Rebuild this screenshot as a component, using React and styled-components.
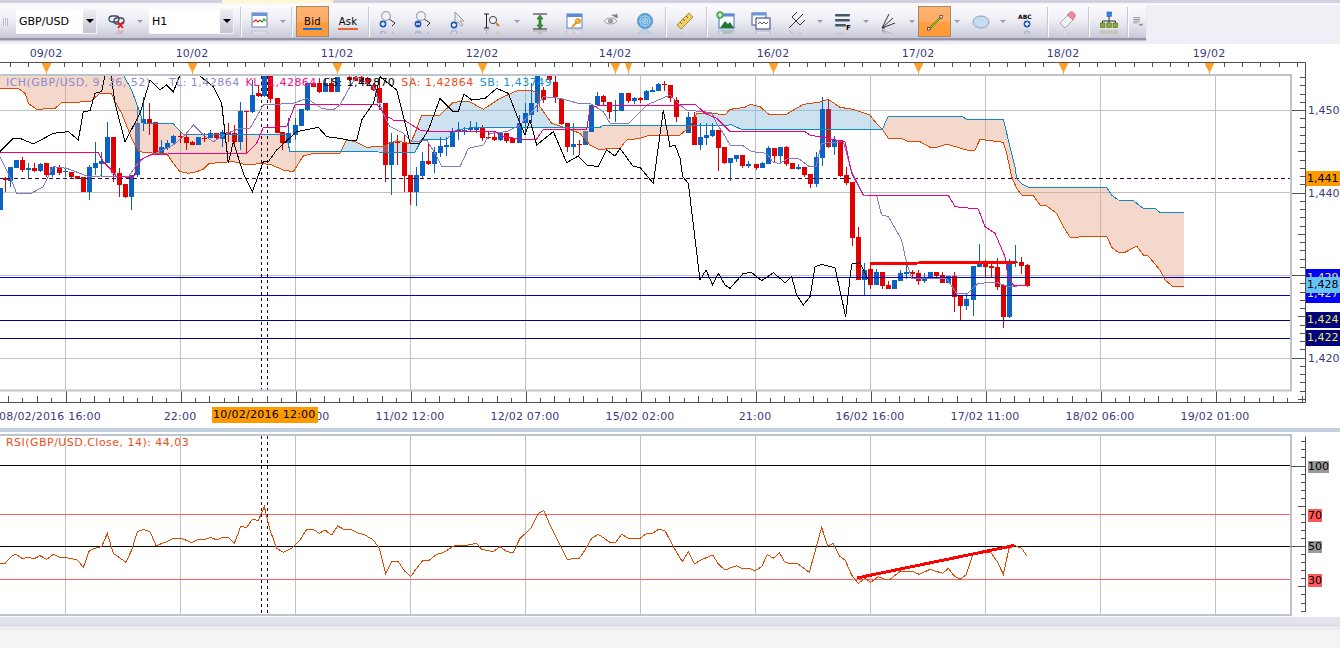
import styled, { createGlobalStyle } from "styled-components";

const GlobalStyle = createGlobalStyle`
  html, body { margin: 0; padding: 0; background: #f4f4f7; }
  body { font-family: "DejaVu Sans", Verdana, sans-serif; font-size: 11px; }
`;

const Page = styled.div`
  width: 1340px;
  height: 648px;
  display: flex;
  flex-direction: column;
  overflow: hidden;
  background: #fff;
`;

const TopStrip = styled.div`
  height: 3px;
  background: #d4d0e2;
  display: flex;
`;

const TabGlow = styled.div`
  width: 111px;
  margin-left: 222px;
  background: #fff6d2;
`;

const ToolbarRow = styled.div`
  height: 41px;
  background: #f0eff5;
  border-top: 2px solid #f8f8fb;
  box-sizing: border-box;
`;

const Toolbar = styled.div`
  width: 1146px;
  height: 35px;
  display: flex;
  align-items: center;
  background: linear-gradient(#fcfcfe 0%, #eeeef4 45%, #d8d8e4 80%, #c6c6d6 100%);
  border-bottom: 2px solid #9393aa;
  box-sizing: border-box;
  box-shadow: 0 1px 1px #c8c8d6;
`;

const Grip = styled.div`
  width: 5px;
  height: 8px;
  margin: 0 8px 0 3px;
  background: repeating-linear-gradient(90deg, #b8b8c6 0 1px, #f4f4f8 1px 2px);
`;

const Combo = styled.div`
  width: ${(p) => p.$w}px;
  margin-left: ${(p) => p.$ml || 0}px;
  height: 25px;
  display: flex;
  align-items: center;
  justify-content: space-between;
  background: #fff;
  box-sizing: border-box;
  padding-left: 3px;
  font-size: 11px;
  color: #000;
  border-right: 1px solid #f4f4f8;
  border-bottom: 1px solid #f4f4f8;
`;

const ComboArrow = styled.div`
  width: 13px;
  height: 100%;
  display: flex;
  align-items: center;
  justify-content: center;
  background: linear-gradient(#f0f0f5, #c4c4d2);
  &::after {
    content: "";
    border-left: 4px solid transparent;
    border-right: 4px solid transparent;
    border-top: 4px solid #000;
  }
`;

const Tool = styled.div`
  flex: 0 0 auto;
  width: ${(p) => p.$w}px;
  margin-left: ${(p) => p.$ml || 0}px;
  height: 100%;
  display: flex;
  align-items: center;
  justify-content: center;
`;

const Caret = styled.div`
  flex: 0 0 auto;
  width: ${(p) => p.$w}px;
  display: flex;
  justify-content: center;
  &::after {
    content: "";
    border-left: 3px solid transparent;
    border-right: 3px solid transparent;
    border-top: 3px solid #9a9ab0;
  }
`;

const Sep = styled.div`
  flex: 0 0 auto;
  width: 2px;
  margin-left: ${(p) => p.$ml || 0}px;
  height: 30px;
  background: linear-gradient(90deg, #c8c8d4 50%, #fcfcfe 50%);
`;

const ActiveButton = styled.div`
  flex: 0 0 auto;
  width: ${(p) => p.$w}px;
  margin-left: ${(p) => p.$ml || 0}px;
  height: 31px;
  box-sizing: border-box;
  border: 1px solid #a08a60;
  background: linear-gradient(#ffb272 0%, #ffab66 50%, #ff9e40 52%, #ff9a3a 100%);
  display: flex;
  flex-direction: column;
  align-items: center;
  justify-content: center;
`;

const QuoteLabel = styled.div`
  font-size: 10px;
  letter-spacing: 0.3px;
  line-height: 11px;
  color: #000;
  border-bottom: 2px solid ${(p) => p.$line};
  padding: 0 1px 1px;
  margin-top: 3px;
`;

const Glyph = styled.svg`
  display: block;
  width: 20px;
  height: 24px;
`;

// the toolbar icons all carry a faint mirror image below their baseline
const Icon = ({ base = 19, label, children }) => (
  <Glyph viewBox="0 0 20 24">
    {children}
    {label}
    <g opacity="0.22" transform={`matrix(1 0 0 -1 0 ${base * 2})`}>
      {children}
    </g>
  </Glyph>
);

const Lens = ({ sign }) => (
  <>
    <path d="M11 9l6 4-3 3" fill="none" stroke="#333" strokeWidth="1" />
    <circle cx="8" cy="6" r="4.4" fill="#f3f3f5" stroke="#a4a4ac" strokeWidth="1.2" />
    <circle cx="5" cy="14" r="3.4" fill="#1c5cb4" />
    <path d="M3 14h4" stroke="#fff" strokeWidth="1.3" />
    {sign === "+" && <path d="M5 12v4" stroke="#fff" strokeWidth="1.3" />}
  </>
);

const CursorPlus = () => (
  <>
    <path d="M7 2v12l3-2 3 4 2-1-3-4h4z" fill="#e8e8ec" stroke="#9a9aa4" />
    <circle cx="6" cy="15" r="3.4" fill="#1c5cb4" />
    <path d="M4 15h4M6 13v4" stroke="#fff" strokeWidth="1.3" />
  </>
);

const BoxZoom = () => (
  <>
    <path d="M1 4h5M3.5 4v14M1 18h5" stroke="#222" fill="none" />
    <circle cx="10" cy="10" r="3.6" fill="#eef4fa" stroke="#444" />
    <path d="M13 13l3 3" stroke="#d08020" strokeWidth="2" />
  </>
);

const FitHeight = () => (
  <>
    <path d="M3 4h14M3 19h14" stroke="#222" />
    <path d="M10 5l-3 4h2v6H7l3 4 3-4h-2V9h2z" fill="#2e9a2e" stroke="#1a5a1a" strokeWidth="0.6" />
  </>
);

const WindowKey = () => (
  <>
    <rect x="2" y="4" width="15" height="14" fill="#fff" stroke="#5a7fc0" />
    <rect x="2" y="4" width="15" height="3" fill="#5a8ad8" />
    <path d="M7 17l5-5" stroke="#e89a20" strokeWidth="2" />
    <circle cx="13" cy="11" r="2.6" fill="#f4b030" stroke="#c88010" strokeWidth="0.6" />
  </>
);

const Eye = () => (
  <>
    <path d="M2 11c3-4 10-4 13 0-3 4-10 4-13 0z" fill="#efefef" stroke="#a6a6a6" />
    <circle cx="8.5" cy="11" r="2.6" fill="#a0a0a0" />
    <path d="M9 6c2-2 4-2 5-1l1-2 1 5-5-1 2-1c-1-.5-2-.5-4 0z" fill="#7c7c7c" />
  </>
);

const Globe = () => (
  <>
    <circle cx="10" cy="11" r="7.5" fill="#5aa4dc" stroke="#4a8cc4" />
    <circle cx="10" cy="11" r="5" fill="none" stroke="#b4d8f0" />
    <circle cx="10" cy="11" r="2.5" fill="none" stroke="#b4d8f0" />
    <path d="M10 3.5v15M2.5 11h15M5 6l10 10M15 6L5 16" stroke="#b4d8f0" strokeWidth="0.6" />
  </>
);

const Ruler = () => (
  <>
    <path d="M2 15L14 3l4 4L6 19z" fill="#f2d060" stroke="#a88a30" />
    <path d="M5 12l2 2M8 9l2 2M11 6l2 2" stroke="#7a6420" />
  </>
);

const ImageWindow = () => (
  <>
    <rect x="3" y="4" width="15" height="14" fill="#fff" stroke="#3a6ab0" />
    <rect x="3" y="4" width="15" height="2.5" fill="#5a8ad8" />
    <path d="M4 18l5-7 3 3 2-2 4 6z" fill="#1e7a30" />
    <circle cx="4" cy="5" r="3.4" fill="#5cb85c" stroke="#2e8a2e" strokeWidth="0.6" />
    <path d="M2 5h4M4 3v4" stroke="#fff" strokeWidth="1.2" />
  </>
);

const TwoWindows = () => (
  <>
    <rect x="1" y="3" width="14" height="12" fill="#fff" stroke="#3a5a9a" />
    <rect x="1" y="3" width="14" height="2.5" fill="#6a96d8" />
    <rect x="5" y="8" width="14" height="11" fill="#fff" stroke="#2a3a7a" />
    <path d="M7 14l2-2 2 2 2-2 2 2 2-2" stroke="#555" fill="none" />
  </>
);

const Pitchfork = () => (
  <path d="M2 18l7-7M5 7l8 8M5 7l5-5M9 11l7-7M13 15l5-5" stroke="#333" fill="none" />
);

const FormulaBars = () => (
  <>
    <rect x="2" y="4" width="15" height="2.6" rx="1" fill="#44566a" />
    <rect x="2" y="9" width="15" height="2.6" rx="1" fill="#44566a" />
    <rect x="2" y="14" width="11" height="2.6" rx="1" fill="#44566a" />
  </>
);

const Fan = () => (
  <path d="M3 18L10 4M3 18L14 8M3 18l13-5M3 18h3" stroke="#333" fill="none" />
);

const PencilLine = () => (
  <>
    <path d="M4 19L16 7" stroke="#5a8a10" strokeWidth="2" />
    <path d="M4 19L16 7" stroke="#b0d030" strokeWidth="0.8" />
    <rect x="2.5" y="17.5" width="2.5" height="2.5" fill="#fff" stroke="#333" strokeWidth="0.7" />
    <rect x="15" y="5.5" width="2.5" height="2.5" fill="#fff" stroke="#333" strokeWidth="0.7" />
  </>
);

const EllipseShape = () => (
  <ellipse cx="10" cy="12" rx="8" ry="6" fill="#c6dcf0" stroke="#8aa4c0" />
);

const PlusBadge = () => (
  <>
    <circle cx="11" cy="14" r="3.4" fill="#1c5cb4" />
    <path d="M9 14h4M11 12v4" stroke="#fff" strokeWidth="1.3" />
  </>
);

const Eraser = () => (
  <>
    <path d="M2 13l8-8 5 5-8 8z" fill="#f2f2f4" stroke="#a8a8b0" />
    <path d="M9 5l3-3c1-.8 2-.8 3 0l2 2c.8 1 .8 2 0 3l-2 3z" fill="#e88aa0" stroke="#c87088" strokeWidth="0.6" />
  </>
);

const Hierarchy = () => (
  <>
    <rect x="8" y="2" width="4.5" height="4.5" fill="#2a8ae8" stroke="#1a5ab0" strokeWidth="0.6" />
    <path d="M10 6.5V11M3.5 13v-2h13v2M10 11v2" stroke="#333" fill="none" />
    <rect x="1.5" y="13" width="4.5" height="4.5" fill="#8aa838" stroke="#4a6810" strokeWidth="0.6" />
    <rect x="7.8" y="13" width="4.5" height="4.5" fill="#8aa838" stroke="#4a6810" strokeWidth="0.6" />
    <rect x="14" y="13" width="4.5" height="4.5" fill="#8aa838" stroke="#4a6810" strokeWidth="0.6" />
  </>
);

const ListMenu = () => (
  <>
    <path d="M5 7h8M5 9h8M5 11h8M5 13h5" stroke="#8a8a9a" />
    <path d="M11 14h6l-3 3z" fill="#8a8a9a" />
  </>
);

const LinkBroken = () => (
  <>
    <rect x="1" y="6" width="10" height="6" rx="3" fill="none" stroke="#3c4a62" strokeWidth="1.3" />
    <rect x="6" y="8" width="10" height="6" rx="3" fill="none" stroke="#3c4a62" strokeWidth="1.3" />
    <path d="M10 12l5 6M15 12l-5 6" stroke="#e81010" strokeWidth="1.8" />
  </>
);

const ChartWindow = () => (
  <>
    <rect x="2" y="3" width="15" height="14" fill="#fff" stroke="#6a7ea8" />
    <rect x="2" y="3" width="15" height="3" fill="#6a96d8" />
    <path d="M3 12l3-2 2 2 2-2" stroke="#e02020" fill="none" strokeWidth="1.2" />
    <path d="M10 10l2 2 2-3 2 2" stroke="#20a020" fill="none" strokeWidth="1.2" />
  </>
);

/* ---- chart data, traced in 3x crop coordinates ---- */
const r = "#e00000";
const b = "#0a62c2";
const dr = "#b02030";

const trace = (ox, oy, rows) =>
  rows.map(([x, t, bt, wt, wb, c, under]) => ({
    x: Math.round(ox + x / 3),
    t: oy + t / 3,
    b: oy + bt / 3,
    wt: oy + wt / 3,
    wb: oy + wb / 3,
    c,
    under,
  }));

const candles = [
  ...trace(0, 70, [
    [1, 355, 420, 355, 420, b],
    [14, 323, 330, 320, 365, r],
    [31, 292, 332, 290, 350, b],
    [48, 270, 295, 270, 295, b],
    [66, 270, 300, 262, 305, r],
    [84, 293, 299, 280, 325, b],
    [102, 293, 303, 280, 305, r],
    [120, 282, 303, 280, 305, b],
    [138, 280, 315, 280, 320, r],
    [156, 292, 315, 292, 322, b],
    [178, 292, 308, 285, 315, r],
    [195, 303, 307, 290, 320, b],
    [213, 305, 320, 305, 325, r],
    [231, 318, 326, 318, 328, r],
    [250, 322, 365, 322, 366, r],
    [267, 291, 365, 285, 390, b],
    [285, 280, 293, 215, 315, b],
    [303, 273, 282, 245, 320, b],
    [321, 200, 278, 155, 280, b],
    [339, 200, 310, 200, 335, r],
    [357, 310, 345, 295, 382, r],
    [375, 342, 382, 342, 385, r],
    [393, 315, 380, 315, 420, b],
    [411, 160, 315, 105, 320, b, true],
    [430, 147, 160, 80, 183, b],
    [448, 147, 160, 100, 195, r],
    [466, 155, 250, 155, 252, r],
    [484, 232, 252, 210, 255, b],
    [502, 220, 235, 210, 240, b],
    [520, 197, 220, 195, 222, b],
    [541, 198, 202, 183, 220, r],
    [558, 200, 218, 190, 240, r],
    [576, 215, 224, 212, 226, r],
    [594, 200, 224, 200, 226, b],
    [612, 203, 206, 190, 215, r],
    [630, 190, 203, 180, 205, b],
    [648, 190, 205, 188, 208, r],
    [666, 187, 207, 180, 230, b],
    [684, 186, 192, 160, 215, r],
    [702, 190, 215, 165, 225, r],
    [720, 123, 215, 95, 240, b],
    [738, 124, 127, 124, 250, r],
    [756, 75, 125, 30, 130, b],
    [774, 70, 78, 45, 80, r],
    [792, 18, 78, 18, 80, b],
    [810, 18, 88, 0, 100, r],
    [831, 85, 190, 85, 190, r],
    [846, 187, 220, 187, 240, r],
    [864, 190, 220, 145, 235, b],
    [885, 165, 195, 145, 210, b],
    [903, 118, 167, 118, 168, b],
    [921, 40, 120, 40, 122, b],
    [939, 40, 50, 35, 52, r],
    [957, 40, 65, 25, 68, r],
    [975, 40, 65, 25, 66, b],
    [993, 40, 65, 25, 66, r],
    [1010, 20, 65, 20, 66, b],
  ]),
  ...trace(340, 70, [
    [27, 20, 30, 18, 32, r],
    [45, 20, 32, 18, 34, r],
    [63, 20, 35, 18, 38, r],
    [81, 25, 42, 20, 45, r],
    [99, 45, 60, 40, 62, r],
    [118, 55, 100, 20, 120, r],
    [136, 98, 285, 98, 335, r, true],
    [154, 217, 285, 190, 375, b],
    [172, 217, 220, 195, 285, r],
    [193, 217, 318, 195, 365, r],
    [211, 315, 365, 315, 405, r],
    [229, 315, 365, 290, 408, b],
    [247, 273, 318, 245, 325, b],
    [265, 273, 283, 215, 285, r],
    [283, 245, 282, 230, 308, b],
    [301, 228, 248, 200, 262, b],
    [319, 225, 231, 200, 258, b],
    [337, 185, 230, 175, 232, b],
    [355, 180, 186, 155, 210, b],
    [373, 180, 186, 170, 195, b],
    [391, 175, 180, 153, 185, b],
    [409, 172, 180, 155, 190, b],
    [427, 172, 204, 165, 214, r],
    [445, 200, 204, 185, 208, r],
    [463, 200, 210, 185, 212, r],
    [481, 190, 210, 190, 212, b],
    [499, 190, 212, 190, 220, r],
    [517, 205, 218, 205, 220, r],
    [538, 160, 218, 135, 218, b],
    [556, 130, 160, 100, 195, b],
    [574, 98, 135, 40, 160, b],
    [592, 18, 100, 0, 125, b],
    [610, 60, 90, 50, 100, r],
    [628, 18, 30, 0, 32, r],
    [646, 35, 80, 18, 100, r],
    [664, 88, 163, 85, 165, r],
    [682, 160, 230, 160, 245, r],
    [700, 222, 230, 160, 255, b],
    [718, 222, 224, 210, 255, r],
    [736, 183, 225, 183, 225, b, true],
    [754, 105, 185, 105, 187, b],
    [772, 78, 105, 65, 108, b],
    [790, 78, 96, 75, 105, r],
    [808, 97, 125, 97, 148, r],
    [826, 120, 124, 90, 155, b],
    [844, 70, 122, 70, 123, b],
    [864, 70, 93, 70, 100, r],
    [882, 85, 93, 80, 103, b],
    [900, 85, 90, 80, 100, r],
    [918, 63, 90, 60, 90, b],
    [936, 60, 65, 50, 65, b],
    [954, 42, 62, 40, 62, b],
    [972, 42, 44, 33, 62, r],
    [990, 44, 85, 44, 95, r],
    [1008, 90, 140, 80, 155, r],
  ]),
  ...trace(680, 90, [
    [25, 80, 130, 65, 130, b],
    [43, 80, 165, 65, 165, r],
    [61, 140, 165, 98, 180, b],
    [79, 135, 145, 98, 165, b],
    [97, 120, 138, 100, 140, b],
    [115, 120, 173, 120, 243, r],
    [133, 172, 220, 172, 222, r],
    [151, 205, 218, 205, 272, b],
    [169, 195, 207, 195, 217, b],
    [187, 195, 228, 195, 235, r],
    [205, 222, 228, 213, 233, b],
    [227, 222, 234, 222, 240, r],
    [245, 220, 234, 215, 235, b],
    [263, 175, 222, 168, 222, b],
    [281, 175, 198, 175, 220, r],
    [299, 172, 198, 172, 217, b],
    [317, 172, 222, 168, 228, r],
    [335, 220, 236, 220, 238, r],
    [353, 232, 236, 222, 240, b],
    [371, 232, 255, 232, 262, r],
    [389, 253, 282, 253, 295, r],
    [407, 202, 282, 185, 290, b],
    [425, 58, 204, 22, 228, b],
    [443, 58, 172, 30, 175, dr],
    [461, 150, 170, 138, 195, b],
    [479, 150, 258, 150, 260, r],
    [497, 256, 278, 232, 285, r],
    [515, 275, 443, 275, 467, r],
    [533, 441, 570, 410, 570, r],
    [553, 540, 570, 520, 615, b],
    [571, 538, 584, 520, 597, r],
    [589, 546, 585, 536, 585, b],
    [607, 546, 588, 546, 597, r],
    [625, 585, 597, 572, 597, r],
    [643, 570, 597, 570, 597, b],
    [661, 549, 573, 540, 573, b],
    [679, 547, 553, 525, 567, b],
    [697, 547, 552, 540, 568, r],
    [715, 549, 573, 541, 585, r],
    [733, 566, 572, 548, 578, b],
    [751, 547, 563, 547, 563, b],
    [769, 547, 558, 547, 560, r],
    [787, 555, 578, 547, 580, r],
    [805, 558, 580, 558, 580, b],
    [823, 558, 620, 545, 665, r],
    [841, 617, 648, 617, 690, r],
    [859, 628, 647, 610, 660, b],
    [879, 528, 630, 528, 678, b],
    [898, 522, 530, 462, 530, b],
    [916, 522, 530, 510, 565, r],
    [934, 527, 533, 520, 565, r],
    [952, 531, 590, 503, 600, r],
    [970, 586, 681, 586, 713, r],
    [988, 517, 682, 507, 684, b],
  ]),
  ...trace(1000, 170, [
    [46, 276, 280, 225, 290, b],
    [64, 276, 287, 262, 312, r],
    [82, 286, 348, 283, 350, r],
  ]),
];

const pts = (ox, oy, list) => list.map(([x, y]) => [ox + x / 3, oy + y / 3]);
const toPoints = (list) => list.map((p) => p.join(",")).join(" ");

const senkouA = [
  ...pts(0, 70, [[0,55],[55,55],[75,70],[85,100],[110,118],[165,115],[185,98],[270,95],[300,70],[335,72],[345,95],[365,130],[395,205],[415,245],[466,250],[500,250],[520,280],[540,305],[565,310],[590,305],[610,298],[625,282],[660,277],[700,275],[740,285],[785,280],[815,285],[850,300],[880,305],[910,258],[940,250],[1020,250]]),
  ...pts(340, 70, [[20,210],[45,215],[80,232],[130,228],[170,212],[210,222],[225,190],[245,135],[300,135],[340,97],[385,93],[430,118],[480,85],[530,63],[575,60],[595,72],[600,110],[635,160],[680,175],[720,190],[750,225],[775,238],[840,235],[860,210],[900,205],[930,195],[1020,195]]),
  ...pts(680, 90, [[30,110],[50,70],[100,70],[135,75],[150,58],[195,52],[210,43],[240,50],[265,72],[320,72],[370,43],[420,36],[445,28],[480,52],[520,58],[570,75],[585,95],[607,118],[625,145],[665,145],[680,153],[720,155],[750,172],[770,172],[800,162],[860,180],[885,180],[900,148],[970,157],[980,190],[995,260],[1010,295]]),
  ...pts(1000, 170, [[65,75],[100,77],[120,105],[140,108],[170,130],[190,170],[210,202],[320,198],[335,232],[355,247],[375,247],[410,228],[430,255],[445,258],[480,300],[495,330],[518,349],[552,349]]),
];

const senkouB = [
  ...pts(0, 70, [[0,-60],[340,-60],[370,15],[395,60],[415,115],[430,160],[520,162],[550,193],[860,195],[870,245],[1020,245]]),
  ...pts(340, 70, [[225,247],[245,208],[320,208],[350,180],[400,172],[780,172],[790,166],[1020,166]]),
  ...pts(680, 90, [[155,105],[185,118],[607,118],[625,78],[845,78],[860,88],[970,88],[985,150],[1005,230]]),
  ...pts(1000, 170, [[50,25],[65,42],[85,52],[320,52],[335,75],[355,90],[400,92],[430,115],[465,115],[480,127],[552,127]]),
];

const chikou = [
  ...pts(0, 70, [[0,245],[40,205],[60,205],[100,222],[160,190],[205,185],[235,210],[250,125],[270,122],[285,70],[305,65],[315,15],[330,-10],[345,100],[375,215],[420,130],[450,30],[480,60],[500,45],[520,65],[540,15],[560,-10],[577,0],[640,50],[665,100],[685,280],[700,215],[730,310],[757,365],[790,275],[805,275],[830,240],[890,185],[955,172],[980,200],[1020,205]]),
  ...pts(340, 70, [[25,210],[50,212],[65,150],[100,100],[120,20],[170,60],[210,220],[240,220],[265,180],[300,85],[340,125],[355,125],[372,72],[395,90],[435,85],[470,55],[505,70],[530,135],[555,195],[570,150],[590,225],[640,185],[680,278],[715,258],[740,285],[775,290],[800,240],[825,258],[840,235],[880,290],[900,292],[940,340],[970,120],[990,230],[1005,225],[1020,265]]),
  ...pts(680, 90, [[8,260],[25,280],[60,570],[78,540],[98,585],[115,550],[135,585],[150,595],[190,550],[215,548],[245,572],[280,548],[315,578],[335,560],[350,615],[370,645],[390,620],[405,530],[425,523],[465,533],[497,680],[515,522],[540,518],[565,570],[572,583]]),
];

const tenkan = [
  ...pts(0, 70, [[0,260],[30,320],[50,370],[90,372],[130,350],[160,290],[200,295],[240,310],[265,320],[300,318],[385,320],[410,285],[430,265],[465,250],[520,225],[555,195],[580,165],[610,195],[640,215],[680,190],[720,175],[750,175],[790,105],[880,100],[920,85],[965,115],[1000,120],[1020,105]]),
  ...pts(340, 70, [[30,50],[50,20],[100,50],[130,130],[150,170],[190,190],[215,215],[235,215],[260,210],[285,250],[305,290],[360,290],[385,235],[430,225],[450,190],[500,185],[540,165],[580,120],[610,80],[660,85],[715,100],[750,100],[790,125],[810,160],[865,162],[920,105],[990,75],[1020,105]]),
  ...pts(680, 90, [[20,60],[95,68],[110,100],[130,130],[150,165],[190,168],[215,185],[260,190],[280,218],[300,220],[325,205],[355,205],[385,228],[408,230],[425,160],[490,155],[515,245],[550,315],[590,318],[605,375],[625,380],[665,450],[680,520],[695,565],[800,565],[830,610],[860,612],[895,580],[950,577],[985,590],[1010,590]]),
];

const kijun = [
  ...pts(0, 70, [[0,248],[295,248],[310,275],[335,300],[350,320],[400,322],[420,270],[450,255],[540,250],[740,250],[770,220],[790,172],[860,170],[885,105],[1020,102]]),
  ...pts(340, 70, [[110,102],[135,135],[160,150],[195,152],[240,180],[265,184],[465,184],[490,200],[540,207],[590,207],[610,178],[740,178],[750,115],[780,105],[1020,105]]),
  ...pts(680, 90, [[45,42],[75,70],[110,85],[150,125],[375,125],[390,135],[495,155],[515,250],[550,315],[805,316],[825,350],[895,357],[915,410],[945,430],[975,500],[985,565],[1005,590]]),
  ...pts(1000, 170, [[40,345],[85,348]]),
];

const rsi = [
  ...pts(0, 380, [[0,550],[15,550],[35,528],[48,523],[68,536],[80,533],[105,535],[120,527],[140,538],[160,523],[180,532],[200,533],[232,540],[250,562],[268,512],[285,505],[305,500],[322,460],[340,520],[378,547],[395,510],[412,455],[430,448],[450,455],[468,497],[500,485],[520,475],[545,475],[575,488],[595,478],[615,478],[632,472],[650,480],[668,472],[685,472],[703,490],[722,440],[740,442],[757,418],[775,421],[793,380],[810,450],[830,505],[850,517],[875,505],[900,480],[920,448],[940,448],[958,460],[975,450],[995,465],[1013,438],[1030,447],[1050,447],[1072,458],[1095,465],[1120,480],[1138,505],[1157,580],[1175,545],[1195,545],[1213,572],[1232,590],[1250,565],[1268,542],[1285,543],[1310,523],[1330,518]]),
  ...pts(450, 400, [[0,445],[15,436],[50,436],[80,430],[95,448],[130,455],[150,440],[170,455],[190,458],[210,415],[243,385],[265,340],[282,332],[300,375],[352,478],[388,475],[405,450],[425,415],[445,403],[480,427],[497,427],[515,403],[535,415],[570,415],[590,400],[608,400],[625,388],[645,392],[670,440],[697,485],[715,455],[733,492],[752,480],[788,465],[805,492],[825,510],[860,497],[880,507],[897,505],[915,512],[935,500],[952,463],[970,475],[988,458],[1005,487],[1025,492],[1042,490],[1078,517],[1115,382],[1133,438],[1150,430],[1168,468],[1185,480],[1205,525],[1225,550],[1245,535],[1262,547],[1285,530],[1310,540]]),
  ...pts(890, 400, [[0,538],[30,515],[70,515],[88,523],[120,508],[158,520],[175,505],[192,527],[210,538],[228,525],[248,465],[270,458],[303,458],[322,485],[340,523],[357,445],[372,436],[395,445],[410,467]]),
];

const yAt = (line, x) => {
  for (let i = 1; i < line.length; i++) {
    const [x0, y0] = line[i - 1];
    const [x1, y1] = line[i];
    if (x >= x0 && x <= x1) return x1 === x0 ? y1 : y0 + ((y1 - y0) * (x - x0)) / (x1 - x0);
  }
  return line[line.length - 1][1];
};

// splits the space between the two senkou lines in runs of one sign
const cloudAreas = () => {
  const areas = [];
  let run = null;
  for (let x = 0; x <= 1184; x++) {
    const a = yAt(senkouA, x);
    const s = yAt(senkouB, x);
    const bull = a < s;
    if (!run || run.bull !== bull) {
      if (run) areas.push(run);
      run = { bull, top: [], bot: [] };
    }
    run.top.push([x, a]);
    run.bot.push([x, s]);
  }
  areas.push(run);
  return areas;
};

const gridX = Array.from({ length: 11 }, (_, i) => 65.5 + i * 115);
const axisPaths = {
  top: "",
  bottom: "",
  right: "",
  rsi: "",
};
for (let n = -2; n * 18.125 + 46 < 1305; n++) {
  const x = Math.round(46 + n * 18.125) + 0.5;
  axisPaths.top += `M${x} 62v5`;
}
for (let n = -4; n * 14.375 + 65.5 < 1305; n++) {
  const x = Math.round(65.5 + n * 14.375) + 0.5;
  const len = n % 8 === 0 ? 12 : (n + 800) % 2 === 0 ? 6 : 4;
  axisPaths.bottom += `M${x} 402v-${len}`;
}
for (let n = -4; 110 + n * 8.25 < 402; n++) {
  const y = Math.round(110 + n * 8.25) + 0.5;
  const len = (n + 100) % 10 === 0 ? 13 : (n + 100) % 5 === 0 ? 7 : 5;
  axisPaths.right += `M1305 ${y}h-${len}`;
}
for (let n = -3; n <= 18; n++) {
  const y = Math.round(465.5 + n * 8.06) + 0.5;
  const len = (n + 100) % 10 === 0 ? 14 : (n + 100) % 5 === 0 ? 7 : 4;
  axisPaths.rsi += `M1305 ${y}h-${len}`;
}

const dayMarks = [
  { x: 46, label: "09/02" },
  { x: 192, label: "10/02" },
  { x: 337, label: "11/02" },
  { x: 482, label: "12/02" },
  { x: 615, label: "14/02" },
  { x: 628, small: true },
  { x: 773, label: "16/02" },
  { x: 918, label: "17/02" },
  { x: 1063, label: "18/02" },
  { x: 1209, label: "19/02" },
];

const timeLabels = [
  { x: 50, label: "08/02/2016 16:00" },
  { x: 180, label: "22:00" },
  { x: 295, label: "10/02 17:00" },
  { x: 410, label: "11/02 12:00" },
  { x: 525, label: "12/02 07:00" },
  { x: 640, label: "15/02 02:00" },
  { x: 755, label: "21:00" },
  { x: 870, label: "16/02 16:00" },
  { x: 985, label: "17/02 11:00" },
  { x: 1100, label: "18/02 06:00" },
  { x: 1215, label: "19/02 01:00" },
];

const levelLines = [
  { y: 277.5, c: "#0000c4" },
  { y: 295.5, c: "#0000c4" },
  { y: 320.5, c: "#000080" },
  { y: 338.5, c: "#000080" },
];

const Pane = styled.div`
  position: relative;
  height: ${(p) => p.$h}px;
  flex: 0 0 auto;
  background: #fff;
`;

const PaneSvg = styled.svg`
  display: block;
  position: absolute;
  left: 0;
  top: 0;
`;

const Divider = styled.div`
  height: 4px;
  flex: 0 0 auto;
  background: #c2cfde;
`;

const Footer = styled.div`
  flex: 1;
  background: linear-gradient(#e3e3ed 0 8px, #d4d4de 8px 9px, #edecf2 9px 13px, #f4f4f7 13px);
`;

const Legend = styled.div`
  position: absolute;
  left: 6px;
  top: ${(p) => p.$top}px;
  display: flex;
  gap: 6px;
  font-size: 11px;
  line-height: 14px;
  letter-spacing: 0.47px;
  white-space: nowrap;
`;

const LegendItem = styled.span`
  color: ${(p) => p.$c};
  margin-right: ${(p) => p.$mr || 0}px;
`;

const PriceTag = styled.div`
  position: absolute;
  left: ${(p) => p.$left || 1306}px;
  top: ${(p) => p.$top}px;
  height: ${(p) => p.$h || 16}px;
  line-height: ${(p) => p.$lh || p.$h || 16}px;
  padding: 0 ${(p) => p.$pad ?? 1}px;
  background: ${(p) => p.$bg};
  color: ${(p) => p.$fg};
  font-size: 11px;
  overflow: hidden;
  width: ${(p) => (p.$w ? `${p.$w}px` : "auto")};
  box-sizing: border-box;
`;

const CrossTime = styled.div`
  position: absolute;
  left: 212px;
  top: 363px;
  width: 106px;
  height: 16px;
  line-height: 16px;
  padding-left: 1px;
  box-sizing: border-box;
  background: #ff9900;
  color: #000;
  font-size: 11px;
  letter-spacing: 0.25px;
  white-space: nowrap;
`;

const axisText = {
  fontFamily: "DejaVu Sans",
  fontSize: 11,
  fill: "#3b3b7d",
  textAnchor: "middle",
  letterSpacing: 0.2,
};

const Line = ({ points, color, width = 1 }) => (
  <polyline
    points={toPoints(points)}
    fill="none"
    stroke={color}
    strokeWidth={width}
    shapeRendering="crispEdges"
  />
);

const CandleBars = ({ items }) =>
  items.map((k) => (
    <g key={k.x} shapeRendering="crispEdges">
      <rect x={k.x} y={k.wt} width="1" height={Math.max(k.wb - k.wt, 1)} fill={k.c} />
      <rect x={k.x - 2} y={k.t} width="5" height={Math.max(k.b - k.t, 1)} fill={k.c} />
    </g>
  ));

const CloudBand = () =>
  cloudAreas().map((area, i) => (
    <polygon
      key={i}
      points={toPoints([...area.top, ...[...area.bot].reverse()])}
      fill={area.bull ? "rgba(127,182,217,0.4)" : "rgba(230,157,127,0.4)"}
      stroke="none"
    />
  ));

const MainChart = () => (
  <PaneSvg width="1340" height="384" viewBox="0 44 1340 384">
    <defs>
      <clipPath id="plot">
        <rect x="0" y="76" width="1290" height="314" />
      </clipPath>
    </defs>

    {dayMarks
      .filter((d) => d.label)
      .map((d) => (
        <text key={d.label} x={d.x} y="57" {...axisText}>
          {d.label}
        </text>
      ))}
    <path d={`M0 62.5H1305.5V402.5H0`} fill="none" stroke="#505050" />
    <path d={axisPaths.top + axisPaths.bottom + axisPaths.right} stroke="#505050" shapeRendering="crispEdges" />

    <g clipPath="url(#plot)" shapeRendering="crispEdges">
      {gridX.map((x) => (
        <path key={x} d={`M${x} 76V390`} stroke="#c0c0c0" />
      ))}
      {[110.5, 192.5, 275.5, 358.5].map((y) => (
        <path key={y} d={`M0 ${y}H1290`} stroke="#c0c0c0" />
      ))}
      <CandleBars items={candles.filter((k) => k.under)} />
      <CloudBand />
      <CandleBars items={candles.filter((k) => !k.under)} />
      <path d="M0 178.5H1290" stroke="#400040" strokeDasharray="4 3" />
      {levelLines.map((l) => (
        <path key={l.y} d={`M0 ${l.y}H1290`} stroke={l.c} />
      ))}
      <path d="M261.5 76V390M267.5 76V390" stroke="#300030" strokeDasharray="3 3" />
      <Line points={senkouA} color="#e04800" />
      <Line points={senkouB} color="#1088c0" />
      <Line points={tenkan} color="#8878c4" />
      <Line points={kijun} color="#f00080" />
      <Line points={chikou} color="#000" />
      <path d="M870 263.5L1017 262" stroke="#ff0000" strokeWidth="3" shapeRendering="crispEdges" />
    </g>

    <path d="M0 75H1291V390.5H0" fill="none" stroke="#bcc4cc" strokeWidth="2" />

    {dayMarks.map((d) => (
      <g key={d.x}>
        <path d={`M${d.x + 0.5} 72V76`} stroke="#f0b070" />
        <polygon
          points={
            d.small
              ? `${d.x - 3},63 ${d.x + 4},63 ${d.x + 0.5},73`
              : `${d.x - 4.5},63 ${d.x + 5.5},63 ${d.x + 0.5},73`
          }
          fill="#ffa028"
        />
      </g>
    ))}

    {timeLabels.map((t) => (
      <text key={t.x} x={t.x} y="420" {...axisText}>
        {t.label}
      </text>
    ))}
  </PaneSvg>
);

const RsiChart = () => (
  <PaneSvg width="1340" height="185" viewBox="0 432 1340 185">
    <defs>
      <clipPath id="rsiplot">
        <rect x="0" y="436" width="1290" height="178" />
      </clipPath>
    </defs>
    <g clipPath="url(#rsiplot)" shapeRendering="crispEdges">
      {gridX.map((x) => (
        <path key={x} d={`M${x} 436V614`} stroke="#c0c0c0" />
      ))}
      <path d="M0 465.5H1290M0 546.5H1290" stroke="#000" />
      <path d="M0 514.5H1290M0 579.5H1290" stroke="#ff6060" />
      <path d="M261.5 436V614M267.5 436V614" stroke="#300030" strokeDasharray="3 3" />
      <Line points={rsi} color="#e04800" />
      <path d="M857 578L1014 545.5" stroke="#ff0000" strokeWidth="3" shapeRendering="crispEdges" />
    </g>
    <path d="M0 435H1291V615H0" fill="none" stroke="#bcc4cc" strokeWidth="2" />
    <path d="M1305.5 436.5V612" stroke="#505050" fill="none" />
    <path d={axisPaths.rsi} stroke="#505050" shapeRendering="crispEdges" />
  </PaneSvg>
);

const IconLabel = styled.text`
  font-family: "DejaVu Sans", sans-serif;
  font-weight: 700;
  fill: #000;
`;

export default function App() {
  return (
    <>
      <GlobalStyle />
      <Page>
        <TopStrip>
          <TabGlow />
        </TopStrip>
        <ToolbarRow>
          <Toolbar>
            <Grip />
            <Combo $w={81}>
              GBP/USD
              <ComboArrow />
            </Combo>
            <Tool $w={28} $ml={7}><Icon><LinkBroken /></Icon></Tool>
            <Caret $w={16} />
            <Combo $w={85} $ml={1}>
              H1
              <ComboArrow />
            </Combo>
            <Sep $ml={6} />
            <Tool $w={30} $ml={3}><Icon><ChartWindow /></Icon></Tool>
            <Caret $w={16} />
            <Sep />
            <ActiveButton $w={33} $ml={3}>
              <QuoteLabel $line="#0a70e0">Bid</QuoteLabel>
            </ActiveButton>
            <Tool $w={32} $ml={3}>
              <QuoteLabel $line="#f06030">Ask</QuoteLabel>
            </Tool>
            <Sep $ml={4} />
            <Tool $w={36}><Icon><Lens sign="+" /></Icon></Tool>
            <Tool $w={34}><Icon><Lens sign="-" /></Icon></Tool>
            <Tool $w={36}><Icon><CursorPlus /></Icon></Tool>
            <Tool $w={34}><Icon><BoxZoom /></Icon></Tool>
            <Caret $w={14} />
            <Tool $w={32}><Icon base={20}><FitHeight /></Icon></Tool>
            <Tool $w={38}><Icon><WindowKey /></Icon></Tool>
            <Tool $w={36}><Icon><Eye /></Icon></Tool>
            <Tool $w={30}><Icon><Globe /></Icon></Tool>
            <Sep $ml={5} />
            <Tool $w={36}><Icon base={21}><Ruler /></Icon></Tool>
            <Sep $ml={3} />
            <Tool $w={36}><Icon><ImageWindow /></Icon></Tool>
            <Tool $w={34}><Icon base={20}><TwoWindows /></Icon></Tool>
            <Tool $w={38}><Icon><Pitchfork /></Icon></Tool>
            <Caret $w={8} />
            <Tool $w={38}>
              <Icon base={20} label={<IconLabel x="13" y="20" fontSize="7">F</IconLabel>}>
                <FormulaBars />
              </Icon>
            </Tool>
            <Caret $w={8} />
            <Tool $w={38}><Icon><Fan /></Icon></Tool>
            <Caret $w={8} />
            <ActiveButton $w={33} $ml={2}>
              <Icon base={40}><PencilLine /></Icon>
            </ActiveButton>
            <Caret $w={12} />
            <Tool $w={36}><Icon base={40}><EllipseShape /></Icon></Tool>
            <Caret $w={8} />
            <Tool $w={38}>
              <Icon label={<IconLabel x="2" y="9" fontSize="6">ABC</IconLabel>}>
                <PlusBadge />
              </Icon>
            </Tool>
            <Sep $ml={2} />
            <Tool $w={38}><Icon><Eraser /></Icon></Tool>
            <Sep $ml={1} />
            <Tool $w={37}><Icon><Hierarchy /></Icon></Tool>
            <Sep />
            <Tool $w={17}><Icon base={40}><ListMenu /></Icon></Tool>
          </Toolbar>
        </ToolbarRow>

        <Pane $h={384}>
          <MainChart />
          <Legend $top={32}>
            <LegendItem $c="#8c8ccc" $mr={4}>ICH(GBP/USD, 9, 26, 52) -</LegendItem>
            <LegendItem $c="#8c8ccc">TL: 1,42864</LegendItem>
            <LegendItem $c="#f0108a">KL: 1,42864</LegendItem>
            <LegendItem $c="#000">CS: 1,42870</LegendItem>
            <LegendItem $c="#e85020">SA: 1,42864</LegendItem>
            <LegendItem $c="#2090d0">SB: 1,43749</LegendItem>
          </Legend>
          <PriceTag $top={127} $bg="#ff9900" $fg="#000" $w={34}>1,441</PriceTag>
          <PriceTag $top={59} $bg="#fff" $fg="#3b3b7d" $left={1307} $h={15}>1,450</PriceTag>
          <PriceTag $top={142} $bg="#fff" $fg="#3b3b7d" $left={1307} $h={15}>1,440</PriceTag>
          <PriceTag $top={307} $bg="#fff" $fg="#3b3b7d" $left={1307} $h={15}>1,420</PriceTag>
          <PriceTag $top={225} $bg="#0000ff" $fg="#ecf040" $w={34} $h={16} $lh={17}>1,429</PriceTag>
          <PriceTag $top={243} $bg="#0000ff" $fg="#ecf040" $w={34} $h={16} $lh={14}>1,427</PriceTag>
          <PriceTag $top={233} $bg="#66c4fa" $fg="#000" $w={34} $h={16}>1,428</PriceTag>
          <PriceTag $top={268} $bg="#000080" $fg="#ecf040" $w={34} $h={16}>1,424</PriceTag>
          <PriceTag $top={286} $bg="#000080" $fg="#ecf040" $w={34} $h={16}>1,422</PriceTag>
          <CrossTime>10/02/2016 12:00</CrossTime>
        </Pane>
        <Divider />
        <Pane $h={185}>
          <RsiChart />
          <Legend $top={4}>
            <LegendItem $c="#e85020">RSI(GBP/USD.Close, 14): 44,03</LegendItem>
          </Legend>
          <PriceTag $left={1308} $top={29} $bg="#999" $fg="#000" $h={12} $pad={0}>100</PriceTag>
          <PriceTag $left={1308} $top={77} $bg="#ff5858" $fg="#000" $h={13} $pad={0}>70</PriceTag>
          <PriceTag $left={1308} $top={109} $bg="#999" $fg="#000" $h={12} $pad={0}>50</PriceTag>
          <PriceTag $left={1308} $top={142} $bg="#ff5858" $fg="#000" $h={13} $pad={0}>30</PriceTag>
        </Pane>
        <Footer />
      </Page>
    </>
  );
}
